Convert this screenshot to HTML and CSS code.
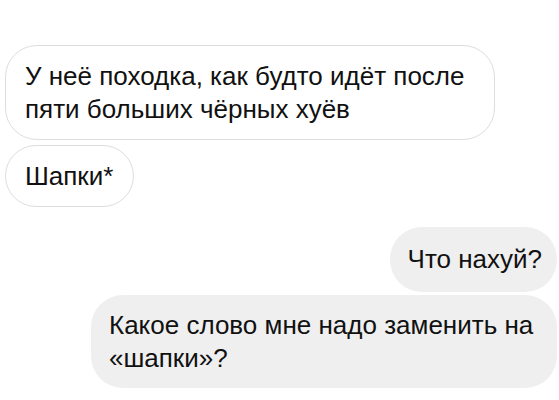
FILE: index.html
```html
<!DOCTYPE html>
<html lang="ru">

<head>
    <meta charset="UTF-8">
    <meta name="viewport" content="width=device-width, initial-scale=1.0">
    <title>Чат</title>
    <link rel="stylesheet" href="styles.css">
</head>

<body>
    <div class="chat">
        <div class="msg msg_in msg_wide">У неё походка, как будто идёт после пяти больших чёрных хуёв</div>
        <div class="msg msg_in msg_short">Шапки*</div>
        <div class="msg msg_out msg_first">Что нахуй?</div>
        <div class="msg msg_out msg_wide2">Какое слово мне надо заменить на «шапки»?</div>
    </div>
</body>

</html>
```

FILE: styles.css
```css
body {
    margin: 0;
    padding: 0;
    background-color: #fff;
    font-family: "Liberation Sans", Arial, sans-serif;
    color: #111;
}

.chat {
    display: flex;
    flex-direction: column;
    padding: 45px 2px 0 5px;
}

.msg {
    width: fit-content;
    box-sizing: border-box;
    font-size: 26px;
    line-height: 33px;
    border-radius: 32px;
}

/* incoming: white with thin grey outline */
.msg_in {
    align-self: flex-start;
    background-color: #fff;
    border: 1px solid #dedede;
    padding: 14px 20px 13px 19px;
}

.msg_wide {
    max-width: 490px;
}

.msg_short {
    margin-top: 5px;
}

/* outgoing: grey fill, right side */
.msg_out {
    align-self: flex-end;
    background-color: #efefef;
    padding: 16px 15px 16px 18px;
}

.msg_first {
    margin-top: 20px;
}

.msg_wide2 {
    margin-top: 3px;
    max-width: 466px;
    padding-top: 14px;
    padding-bottom: 13px;
}
```
